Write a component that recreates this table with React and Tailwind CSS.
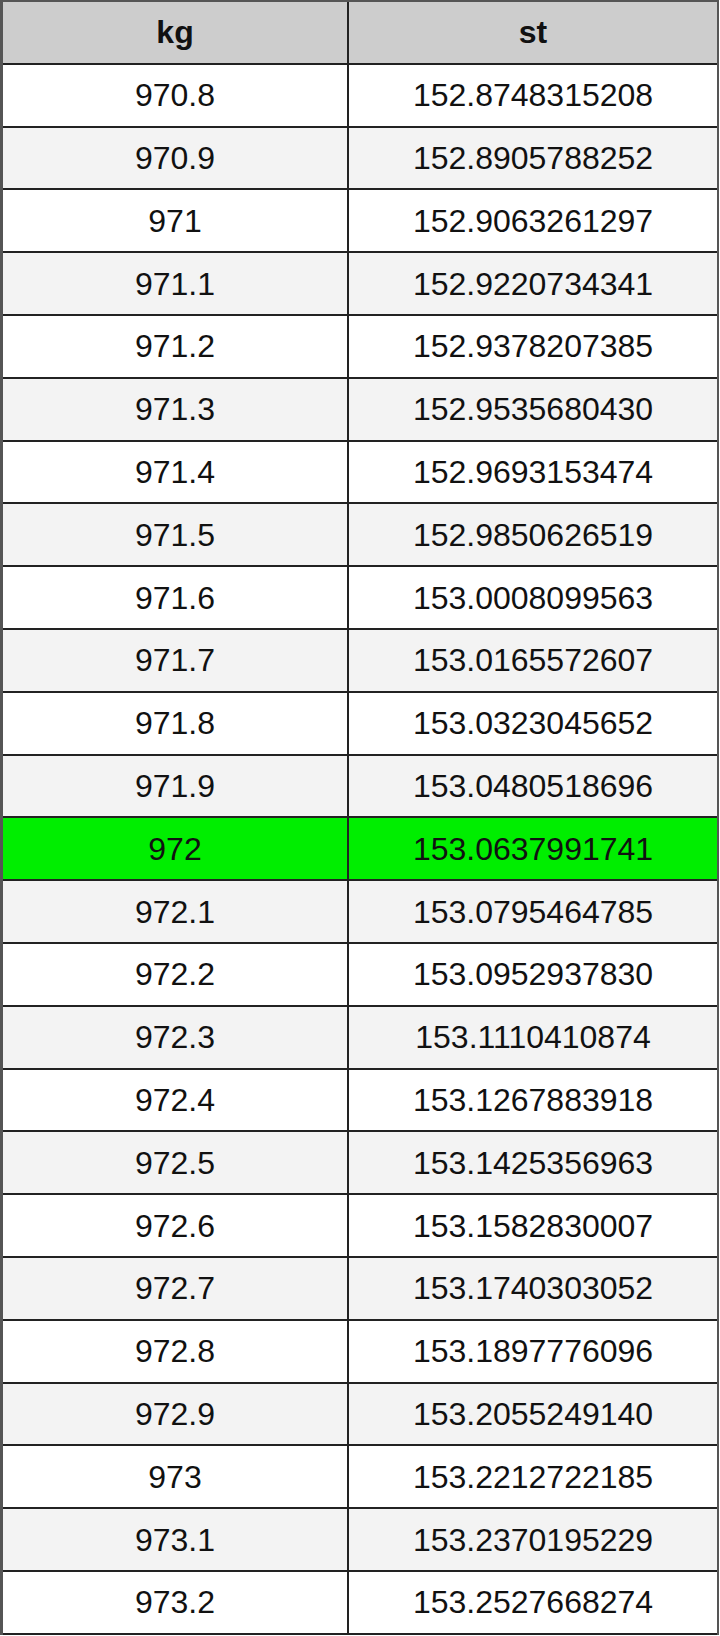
import React from "react";

const rows = [
  ["970.8", "152.8748315208"],
  ["970.9", "152.8905788252"],
  ["971", "152.9063261297"],
  ["971.1", "152.9220734341"],
  ["971.2", "152.9378207385"],
  ["971.3", "152.9535680430"],
  ["971.4", "152.9693153474"],
  ["971.5", "152.9850626519"],
  ["971.6", "153.0008099563"],
  ["971.7", "153.0165572607"],
  ["971.8", "153.0323045652"],
  ["971.9", "153.0480518696"],
  ["972", "153.0637991741"],
  ["972.1", "153.0795464785"],
  ["972.2", "153.0952937830"],
  ["972.3", "153.1110410874"],
  ["972.4", "153.1267883918"],
  ["972.5", "153.1425356963"],
  ["972.6", "153.1582830007"],
  ["972.7", "153.1740303052"],
  ["972.8", "153.1897776096"],
  ["972.9", "153.2055249140"],
  ["973", "153.2212722185"],
  ["973.1", "153.2370195229"],
  ["973.2", "153.2527668274"],
];

export default function App() {
  return (
    <div className="w-[720px] bg-white" style={{ fontFamily: '"Liberation Sans", Arial, sans-serif' }}>
      <div className="w-[719px] border-l-[3px] border-t-[2px] border-r-[2px] border-[#555]">
        <div className="grid grid-cols-[346px_1fr] h-[62.8px] bg-[#cdcdcd] border-b-2 border-[#222] text-[32px] font-bold text-[#111]">
          <div className="flex items-center justify-center border-r-2 border-[#222]">kg</div>
          <div className="flex items-center justify-center">st</div>
        </div>
        {rows.map(([a, b], i) => {
          const hl = a === "972";
          const bg = hl ? "bg-[#00ee00]" : i % 2 === 1 ? "bg-[#f3f3f3]" : "bg-white";
          return (
            <div
              key={a}
              className={`grid grid-cols-[346px_1fr] h-[62.8px] border-b-2 border-[#222] text-[32px] text-[#111] ${bg}`}
            >
              <div className="flex items-center justify-center border-r-2 border-[#222]">{a}</div>
              <div className="flex items-center justify-center">{b}</div>
            </div>
          );
        })}
      </div>
    </div>
  );
}
